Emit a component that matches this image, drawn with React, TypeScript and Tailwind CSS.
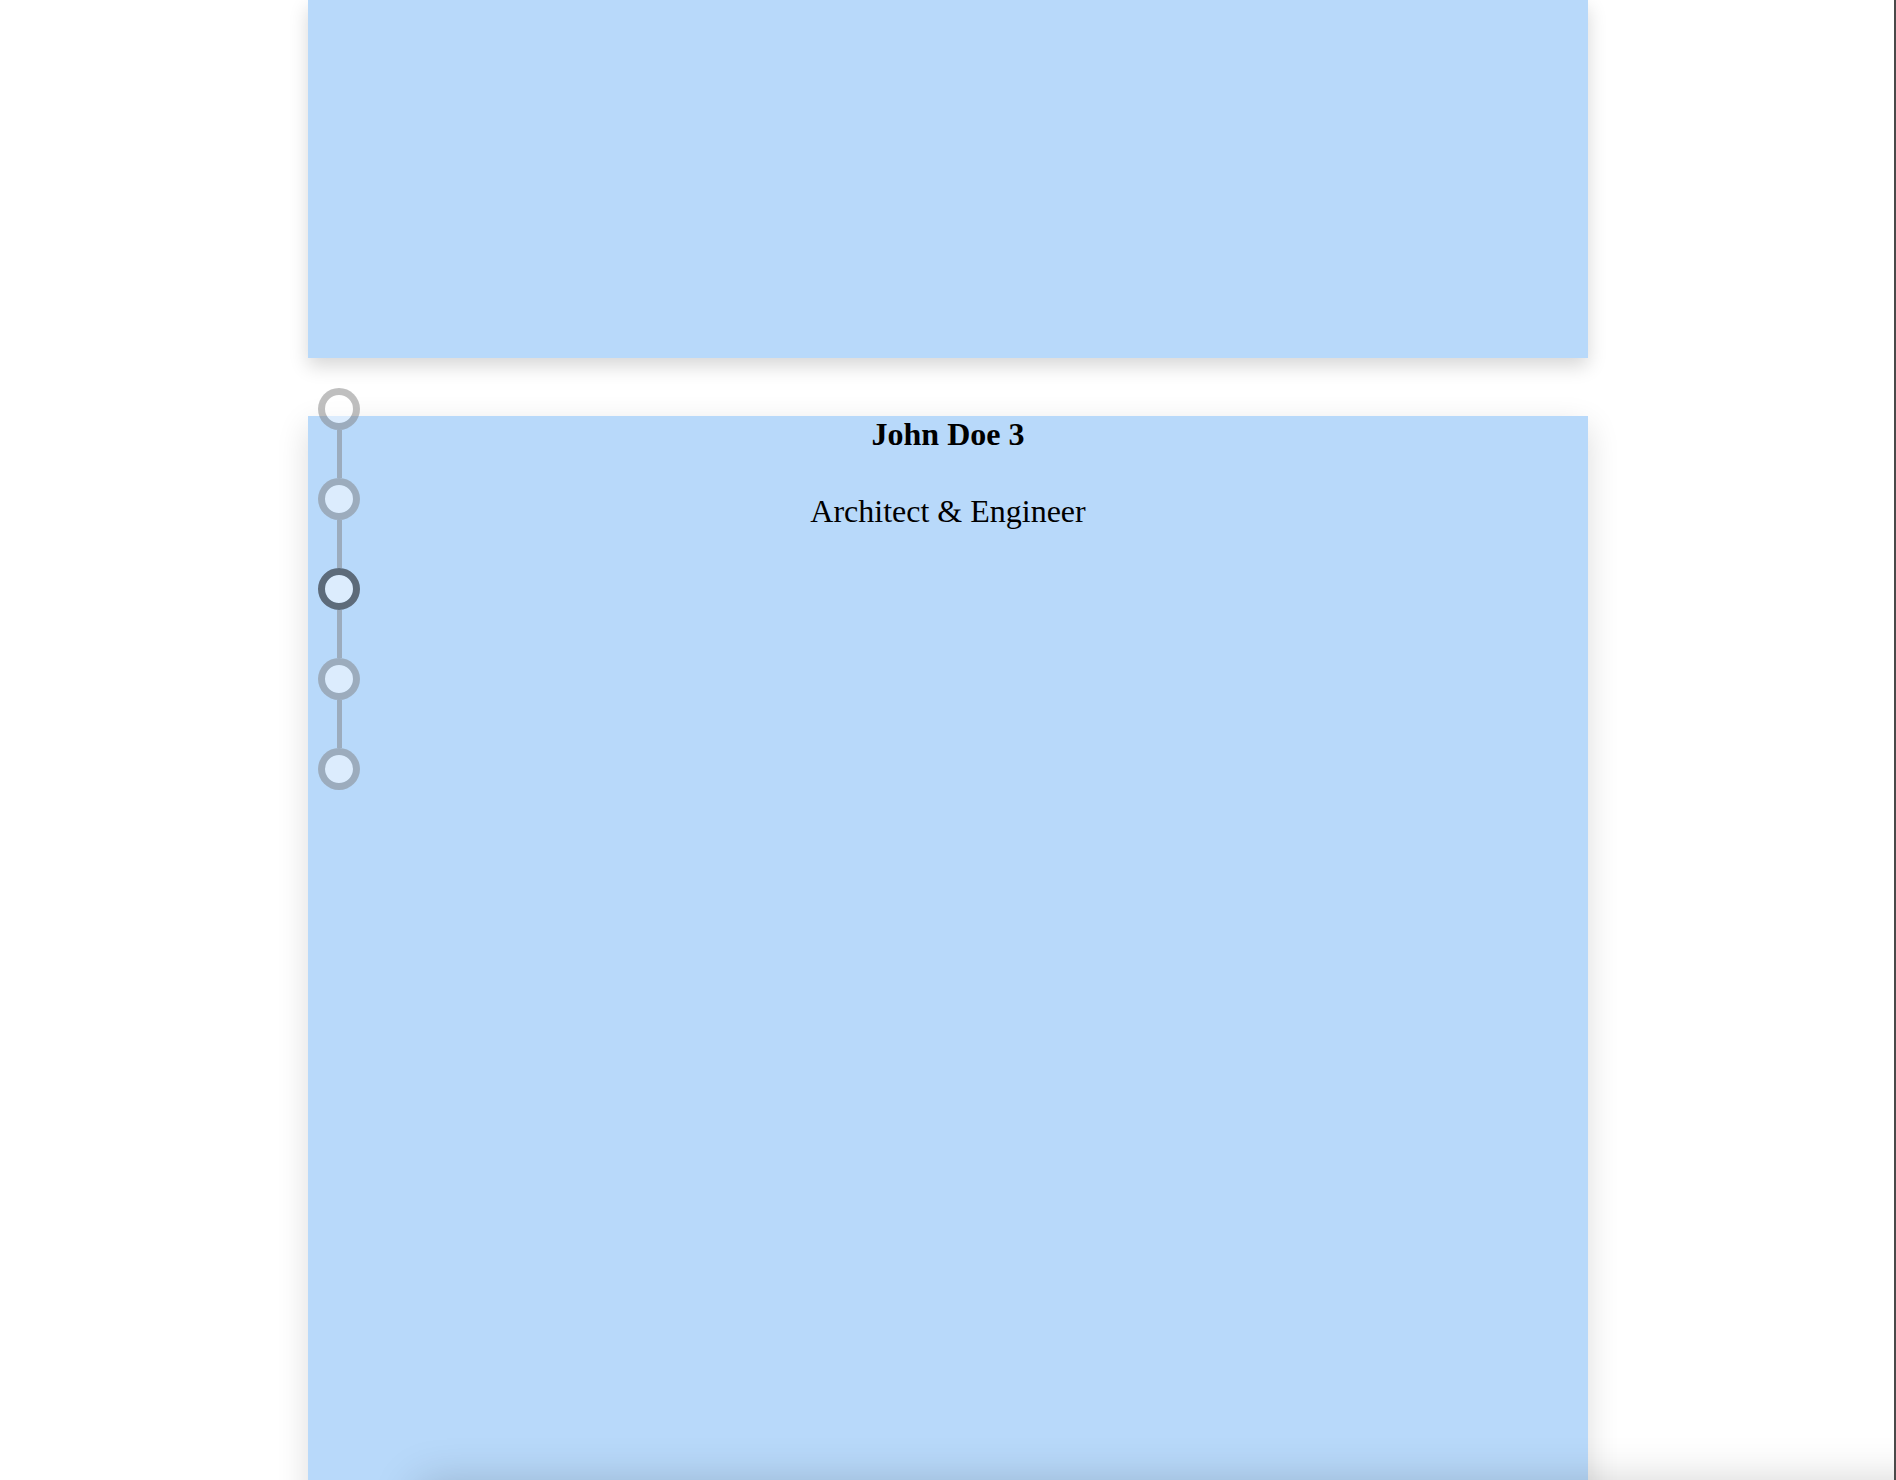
import React from "react";

const steps = [0, 1, 2, 3, 4];
const active = 2;

function StepNav() {
  return (
    <div className="absolute left-[318px] top-[388px] flex flex-col items-center">
      {steps.map((i) => (
        <React.Fragment key={i}>
          {i > 0 && <div className="h-[48px] w-[5px] bg-[rgba(128,128,128,0.5)]" />}
          <div
            className={
              i === active
                ? "h-[42px] w-[42px] rounded-full border-[7px] border-[#5d6b7a] bg-[rgba(255,255,255,0.5)] bg-clip-padding"
                : "h-[42px] w-[42px] rounded-full border-[7px] border-[rgba(128,128,128,0.5)] bg-[rgba(255,255,255,0.5)] bg-clip-padding"
            }
          />
        </React.Fragment>
      ))}
    </div>
  );
}

export default function App() {
  return (
    <div className="relative h-[1480px] w-full overflow-hidden bg-white font-['Liberation_Serif',serif] text-black">
      <div className="mx-auto flex w-[1280px] flex-col">
        {/* previous slide */}
        <section className="h-[358px] bg-[#b8d9fa] shadow-[0_8px_18px_rgba(0,0,0,0.16)]" />

        {/* current slide */}
        <section className="mt-[58px] flex h-[1100px] flex-col items-center bg-[#b8d9fa] shadow-[0_10px_30px_rgba(0,0,0,0.14)]">
          <h1 className="text-[32px] font-bold leading-[36px]">John Doe 3</h1>
          <p className="mt-[41px] text-[32px] leading-[37px]">Architect &amp; Engineer</p>
        </section>

        {/* next slide, only its shadow shows */}
        <section className="-mt-[16px] ml-[110px] h-[400px] w-[1600px] shrink-0 self-start bg-[#b8d9fa] shadow-[0_-16px_44px_rgba(0,0,0,0.2)]" />
      </div>

      <StepNav />

      <div className="absolute right-0 top-0 h-full w-[2px] bg-[#4a4a4a]" />
    </div>
  );
}
